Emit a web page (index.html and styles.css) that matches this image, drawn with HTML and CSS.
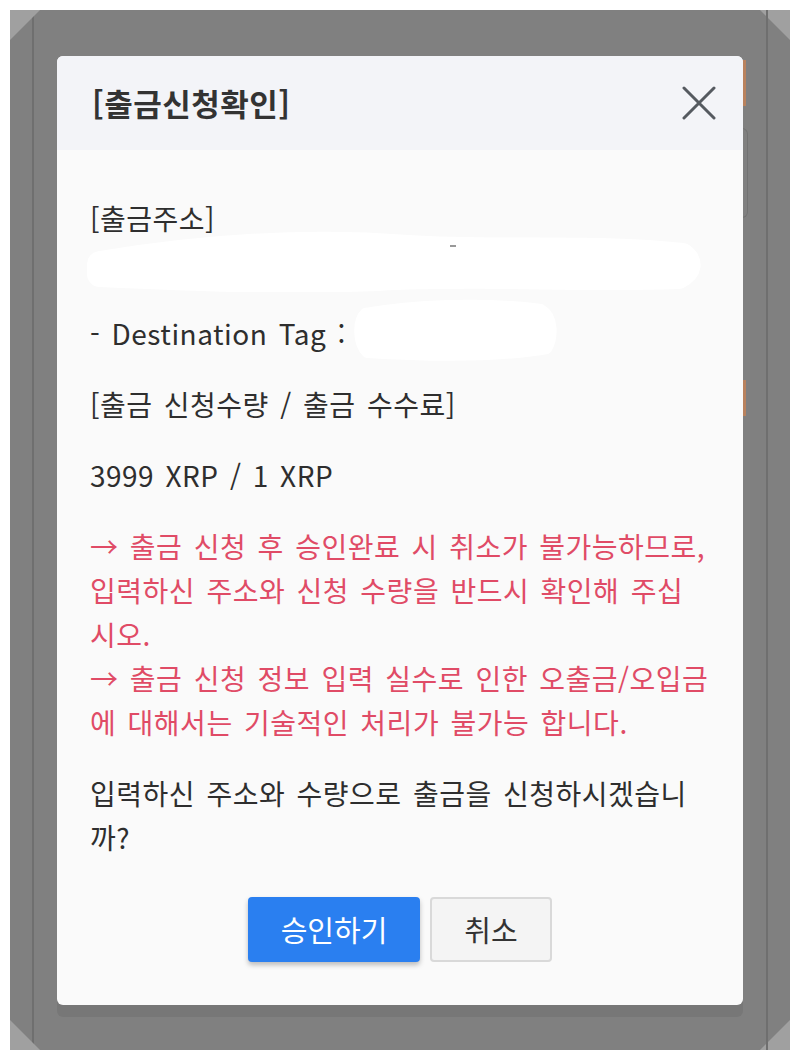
FILE: index.html
```html
<!DOCTYPE html>
<html lang="ko">

<head>
    <meta charset="UTF-8">
    <meta name="viewport" content="width=device-width, initial-scale=1.0">
    <title>출금신청확인</title>
    <link rel="stylesheet" href="styles.css">
</head>

<body>
    <div class="screen">
        <span class="corner tl"></span>
        <span class="corner tr"></span>
        <span class="corner bl"></span>
        <span class="corner br"></span>
        <span class="peek peek-1"></span>
        <span class="peek peek-2"></span>
        <span class="peek-box"></span>

        <div class="modal">
            <div class="modal-head">
                <h4>[출금신청확인]</h4>
                <button class="close" aria-label="close">
                    <svg width="34" height="34" viewBox="0 0 34 34">
                        <path d="M2 2 L32 32 M32 2 L2 32" stroke="#555a60" stroke-width="3" stroke-linecap="round" fill="none" />
                    </svg>
                </button>
            </div>

            <div class="modal-body">
                <p>
                    [출금주소]<br>
                    <span class="address">
                        <svg width="640" height="64" viewBox="0 0 640 64">
                            <path d="M22 36 C120 20 230 12 330 20 C420 26 520 18 604 28 C612 34 612 42 600 48 C500 52 400 44 300 50 C200 54 110 50 22 46 Z" fill="#fff" stroke="#fff" stroke-width="26" stroke-linejoin="round" />
                            <path d="M372 18 L378 18" stroke="#999" stroke-width="2" />
                        </svg>
                    </span>
                </p>

                <p>
                    - Destination Tag :
                    <span class="tag">
                        <svg width="210" height="62" viewBox="0 0 210 62">
                            <path d="M14 14 C60 6 130 2 190 10 C204 18 202 40 196 50 C150 58 80 58 16 54 C6 44 6 22 14 14 Z" fill="#fff" stroke="#fff" stroke-width="10" stroke-linejoin="round" />
                        </svg>
                    </span>
                </p>

                <p>[출금 신청수량 / 출금 수수료]</p>

                <p>3999 XRP / 1 XRP</p>

                <p class="warn">
                    → 출금 신청 후 승인완료 시 취소가 불가능하므로,<br>
                    입력하신 주소와 신청 수량을 반드시 확인해 주십<br>
                    시오.<br>
                    → 출금 신청 정보 입력 실수로 인한 오출금/오입금<br>
                    에 대해서는 기술적인 처리가 불가능 합니다.
                </p>

                <p>
                    입력하신 주소와 수량으로 출금을 신청하시겠습니<br>
                    까?
                </p>

                <div class="actions">
                    <button class="btn btn-ok">승인하기</button>
                    <button class="btn btn-cancel">취소</button>
                </div>
            </div>
        </div>
    </div>
</body>

</html>
```

FILE: styles.css
```css
* {
    margin: 0;
    padding: 0;
    box-sizing: border-box;
    font-family: "Noto Sans CJK KR", sans-serif;
}

body {
    background-color: #fff;
    padding: 10px;
}

.screen {
    position: relative;
    width: 780px;
    height: 1040px;
    background-color: #808080;
    display: flex;
    align-items: center;
    justify-content: center;
}

/* page edges behind the overlay */
.screen::before,
.screen::after {
    content: "";
    position: absolute;
    top: 0;
    bottom: 0;
    width: 2px;
    background-color: #6f6f6f;
}

.screen::before {
    left: 22px;
}

.screen::after {
    right: 22px;
}

.corner {
    position: absolute;
    width: 30px;
    height: 30px;
    background-color: #a0a0a0;
}

.corner.tl {
    top: 0;
    left: 0;
    clip-path: polygon(0 0, 100% 0, 0 100%);
}

.corner.tr {
    top: 0;
    right: 0;
    clip-path: polygon(0 0, 100% 0, 100% 100%);
}

.corner.bl {
    bottom: 0;
    left: 0;
    clip-path: polygon(0 0, 100% 100%, 0 100%);
}

.corner.br {
    bottom: 0;
    right: 0;
    clip-path: polygon(100% 0, 100% 100%, 0 100%);
}

.peek {
    position: absolute;
    right: 44px;
    width: 4px;
    background-color: #b9825e;
}

.peek-1 {
    top: 50px;
    height: 46px;
}

.peek-2 {
    top: 370px;
    height: 36px;
}

.peek-box {
    position: absolute;
    right: 42px;
    top: 118px;
    width: 8px;
    height: 90px;
    border: 1px solid #727272;
    border-left: 0;
    border-radius: 0 6px 6px 0;
}

.modal {
    position: relative;
    z-index: 1;
    width: 686px;
    border-radius: 6px;
    overflow: hidden;
    background-color: #fafafa;
    box-shadow: 0 12px 0 rgba(0, 0, 0, 0.07);
}

.modal-head {
    height: 94px;
    background-color: #f3f4f8;
    display: flex;
    align-items: center;
    justify-content: space-between;
    padding: 0 27px 0 35px;
}

.modal-head h4 {
    font-size: 31px;
    font-weight: 700;
    letter-spacing: 0.5px;
    color: #333;
}

.close {
    border: 0;
    background: none;
    display: flex;
    cursor: pointer;
}

.modal-body {
    padding: 46px 20px 43px 33px;
}

.modal-body p {
    font-size: 28px;
    line-height: 44px;
    color: #2e2e2e;
    letter-spacing: 0.5px;
    word-spacing: 3px;
    white-space: nowrap;
    margin-bottom: 27px;
}

.address {
    display: block;
    position: relative;
    height: 44px;
}

.address svg {
    position: absolute;
    left: -12px;
    top: -12px;
}

.tag {
    display: inline-block;
    position: relative;
    width: 200px;
    height: 44px;
    vertical-align: top;
}

.tag svg {
    position: absolute;
    left: -6px;
    top: -12px;
}

.modal-body p.warn {
    color: #e04b66;
}

.actions {
    display: flex;
    justify-content: center;
    gap: 10px;
    padding-top: 11px;
    padding-right: 13px;
}

.btn {
    height: 65px;
    border-radius: 4px;
    font-size: 29px;
    cursor: pointer;
}

.btn-ok {
    width: 172px;
    border: 0;
    background-color: #2a7ff0;
    color: #fff;
    box-shadow: 0 3px 5px rgba(0, 0, 0, 0.25);
}

.btn-cancel {
    width: 122px;
    border: 2px solid #d9d9d9;
    background-color: #f4f4f4;
    color: #333;
}
```
